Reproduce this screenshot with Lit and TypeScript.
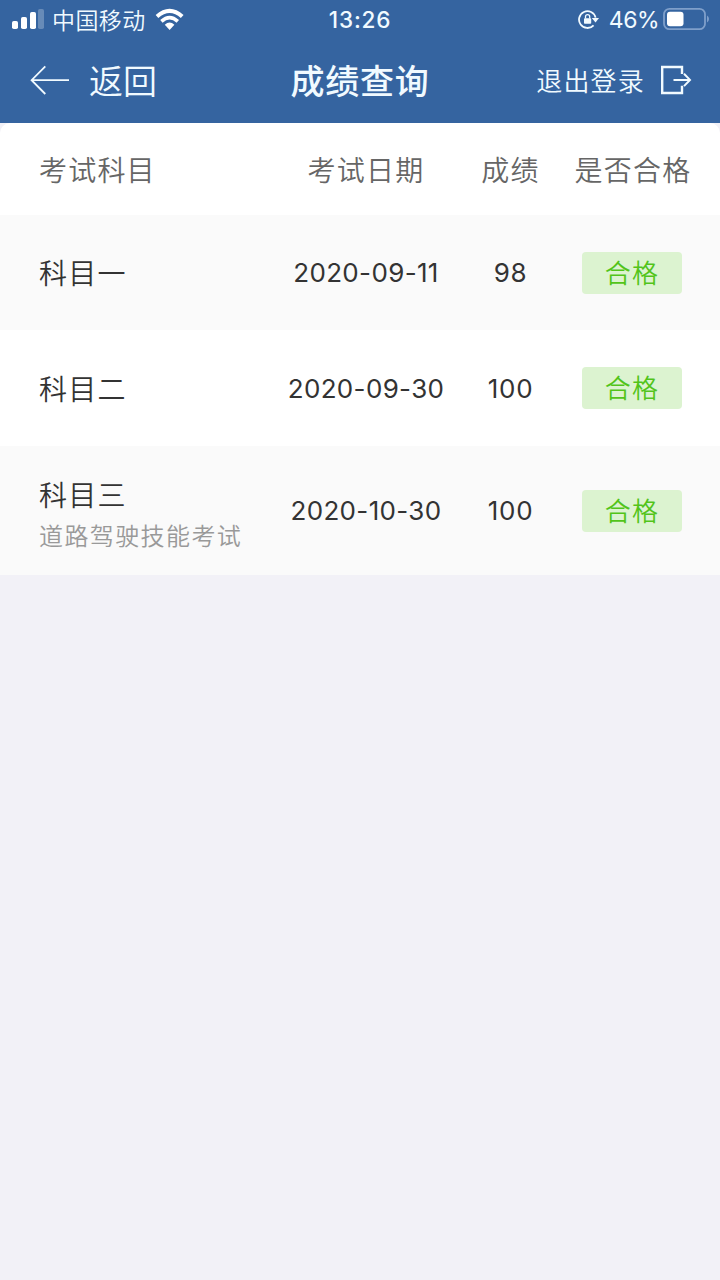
import { LitElement, html, css, nothing } from "lit";
import { customElement, state } from "lit/decorators.js";

interface Score {
  subject: string;
  note?: string;
  date: string;
  score: number;
  cls: string;
}

@customElement("status-bar")
class StatusBar extends LitElement {
  static styles = css`
    :host { display: grid; grid-template-columns: 1fr auto 1fr; align-items: center; height: 40px; color: #f1faff; }
    .left { display: flex; align-items: center; padding-left: 12px; }
    .carrier { font-size: 23px; line-height: 38px; padding-bottom: 2px; letter-spacing: 0.4px; margin: 0 9px 0 8px; font-weight: 350; }
    .time { font: 500 22.5px/40px Inter, sans-serif; letter-spacing: 0.8px; }
    .right { display: flex; align-items: center; justify-content: flex-end; padding-right: 11px; }
    .percent { font: 400 23px/40px Inter, sans-serif; letter-spacing: -0.5px; margin: 0 4px 0 10px; }
    svg { display: block; flex: none; }
  `;
  render() {
    return html`
      <div class="left">
        <svg width="32" height="40" viewBox="0 0 32 40" fill="#fff">
          <rect x="0" y="21" width="6" height="8" rx="1.8" />
          <rect x="9" y="17" width="6" height="12" rx="1.8" />
          <rect x="18" y="12" width="6" height="17" rx="1.8" />
          <rect x="26" y="9" width="6" height="20" rx="1.8" opacity=".25" />
        </svg>
        <span class="carrier">中国移动</span>
        <svg width="30" height="40" viewBox="0 0 30 40" fill="none" stroke="#fff" stroke-width="4">
          <path d="M2 16.6Q14.6 5.2 27.2 16.6" />
          <path d="M6.4 21.3Q14.6 13.9 22.8 21.3" stroke-width="3.6" />
          <path d="M9.8 24.8Q14.6 20.3 19.4 24.8L14.6 29.9Z" fill="#fff" stroke="none" />
        </svg>
      </div>
      <div class="time">13:26</div>
      <div class="right">
        <svg width="21" height="40" viewBox="0 0 21 40" fill="none" stroke="#f1faff" stroke-width="1.8">
          <path d="M15.6 25.3A8.4 8.4 0 1 1 17.6 17.6" />
          <path d="M13.8 18H21L17.5 22.5Z" fill="#f1faff" stroke="none" />
          <rect x="6" y="18.2" width="7.2" height="5.6" rx=".8" fill="#f1faff" stroke="none" />
          <path d="M7.5 18.5V16.7a2.1 2.1 0 0 1 4.2 0V18.5" stroke-width="1.3" />
        </svg>
        <span class="percent">46%</span>
        <svg width="46" height="40" viewBox="0 0 46 40">
          <rect x="1" y="8.8" width="41" height="20.4" rx="5.5" fill="none" stroke="#7f9fca" stroke-width="1.8" />
          <rect x="4" y="11.7" width="16.5" height="14.6" rx="3" fill="#fff" />
          <path d="M44 15.5q2 1 2 3.5t-2 3.5Z" fill="#7f9fca" />
        </svg>
      </div>`;
  }
}

@customElement("nav-bar")
class NavBar extends LitElement {
  static styles = css`
    :host { display: grid; grid-template-columns: 1fr auto 1fr; align-items: start; height: 83px; color: #f1faff; }
    .back { display: flex; align-items: center; padding-left: 30px; font-size: 34px; line-height: 80px; font-weight: 350; }
    .back svg { margin-right: 19px; }
    .title { font-size: 34px; line-height: 80px; font-weight: 500; letter-spacing: 0.8px; }
    .exit { display: flex; align-items: center; justify-content: flex-end; padding-right: 28px; font-size: 26px; line-height: 80px; letter-spacing: 1.2px; font-weight: 350; }
    .exit svg { margin-left: 15px; }
    svg { display: block; flex: none; }
  `;
  render() {
    return html`
      <div class="back">
        <svg width="40" height="30" viewBox="0 0 40 30" fill="none" stroke="#f1faff" stroke-width="1.8">
          <path d="M15.3 1.4L1.6 15.2L15.3 29M1.6 15.2H39" />
        </svg>
        <span>返回</span>
      </div>
      <div class="title">成绩查询</div>
      <div class="exit">
        <span>退出登录</span>
        <svg width="32" height="30" viewBox="0 0 32 30" fill="none" stroke="#f1faff" stroke-width="2.4">
          <path d="M22 9V2H2.2V28H22V20.8" />
          <path d="M13.5 14.9H30M24 8.7L30 14.9L24 21.1" stroke-width="2" />
        </svg>
      </div>`;
  }
}

@customElement("score-table")
class ScoreTable extends LitElement {
  @state() private rows: Score[] = [
    { subject: "科目一", date: "2020-09-11", score: 98, cls: "row odd first" },
    { subject: "科目二", date: "2020-09-30", score: 100, cls: "row" },
    { subject: "科目三", note: "道路驾驶技能考试", date: "2020-10-30", score: 100, cls: "row odd tall" },
  ];
  static styles = css`
    :host { display: block; background: #fff; border-radius: 10px 10px 0 0; }
    .row { display: grid; grid-template-columns: 274px 184px 105px 138px; align-items: center; height: 116px; color: #333; font-size: 28px; }
    .row > * { text-align: center; white-space: nowrap; }
    .row > :first-child { text-align: left; padding-left: 39px; }
    .head { height: 92px; color: #666; letter-spacing: 1.2px; font-weight: 350; }
    .head > :last-child { padding-left: 2px; }
    .first { height: 115px; }
    .tall { height: 129px; }
    .tall > :first-child { padding-top: 7px; }
    .odd { background: #fafafa; }
    .subject { letter-spacing: 1.2px; line-height: 40px; padding-bottom: 1px; font-weight: 350; }
    .note { font-size: 24px; line-height: 40px; letter-spacing: 1.4px; color: #999; font-weight: 350; }
    .num { font-family: Inter, sans-serif; font-size: 26px; letter-spacing: 0.35px; }
    .score { letter-spacing: 0.7px; }
    .pass { justify-self: center; width: 100px; height: 42px; border-radius: 4px; background: #dcf3d0; color: #52c41a; font-size: 26px; line-height: 40px; letter-spacing: 1.2px; font-weight: 350; }
  `;
  render() {
    return html`
      <div class="row head">
        <div>考试科目</div><div>考试日期</div><div>成绩</div><div>是否合格</div>
      </div>
      ${this.rows.map((r) => html`
        <div class=${r.cls}>
          <div>
            <div class="subject">${r.subject}</div>
            ${r.note ? html`<div class="note">${r.note}</div>` : nothing}
          </div>
          <div class="num">${r.date}</div>
          <div class="num score">${r.score}</div>
          <div class="pass">合格</div>
        </div>`)}`;
  }
}

@customElement("app-root")
class AppRoot extends LitElement {
  static styles = css`
    :host { display: block; height: 1280px; overflow: hidden; background: #f2f1f7; font-family: "Noto Sans CJK SC", sans-serif; }
    .top { background: #3564a0; }
  `;
  render() {
    return html`
      <div class="top"><status-bar></status-bar><nav-bar></nav-bar></div>
      <score-table></score-table>`;
  }
}
